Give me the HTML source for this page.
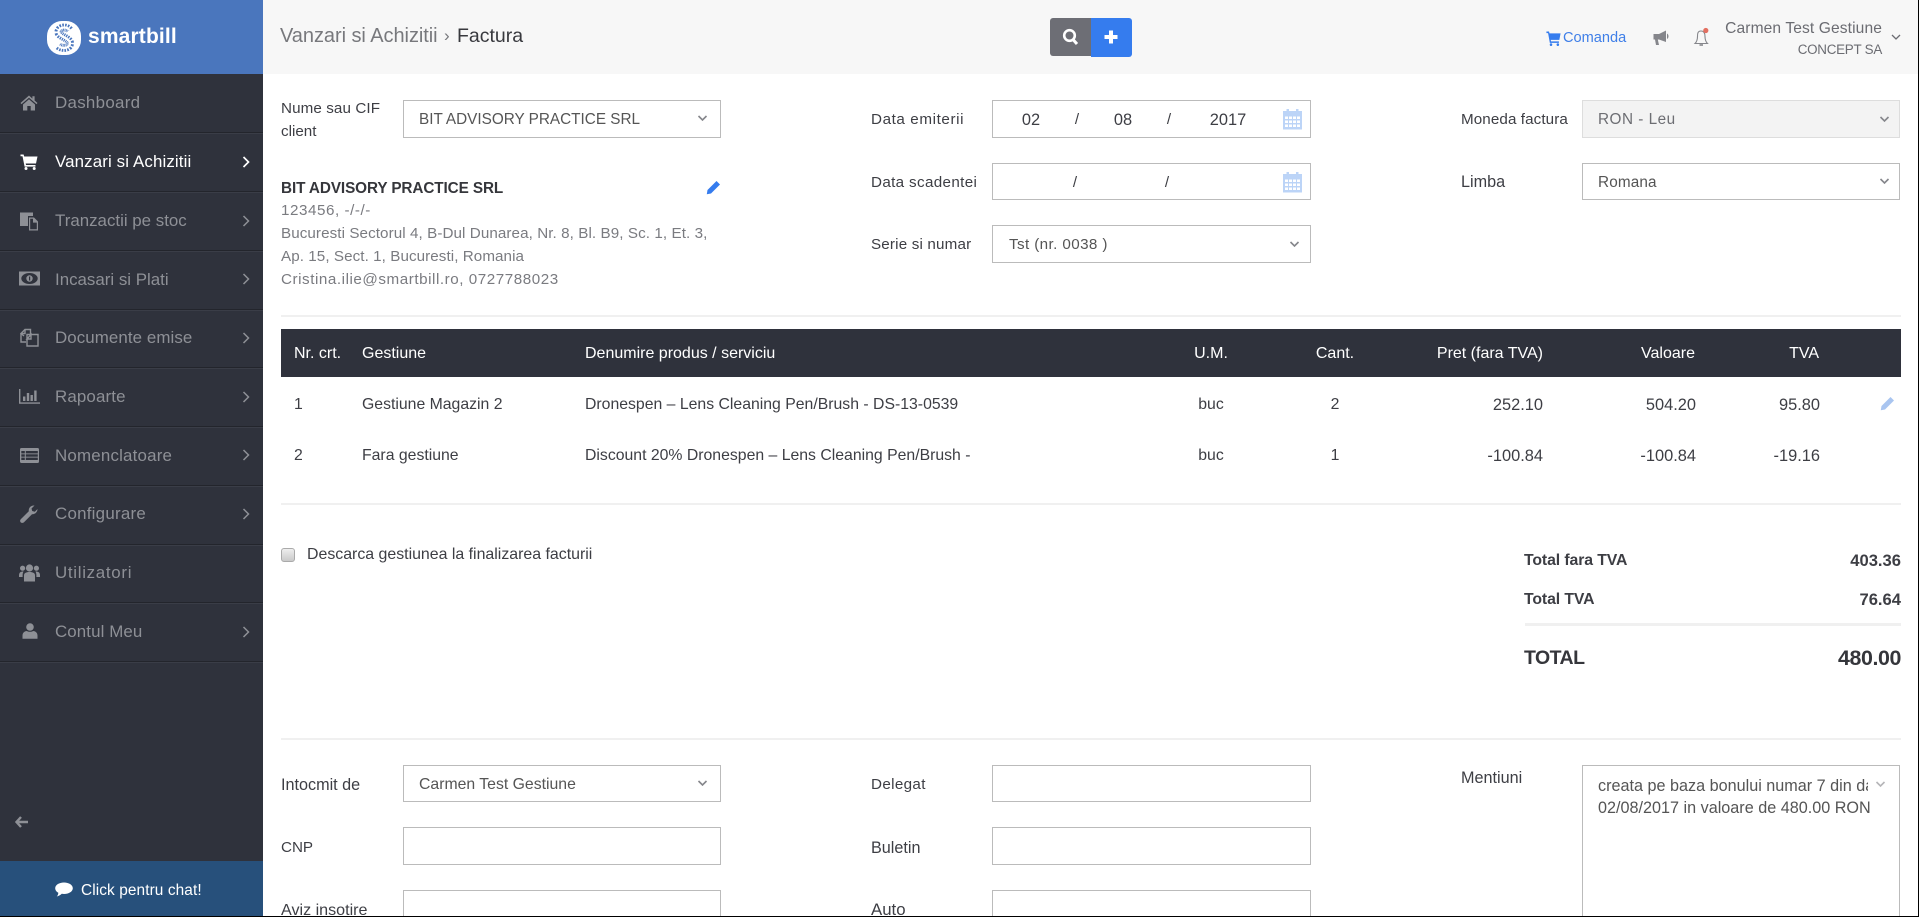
<!DOCTYPE html>
<html lang="ro">
<head>
<meta charset="utf-8">
<title>Factura</title>
<style>
html,body{margin:0;padding:0;width:1919px;height:917px;overflow:hidden;background:#fff}
body{font-family:"Liberation Sans",sans-serif;position:relative;color:#444}
#page{position:absolute;left:0;top:0;width:1918px;height:916px;overflow:hidden;background:#fff}
#edgeR{position:absolute;left:1918px;top:0;width:1px;height:917px;background:#000}
#edgeB{position:absolute;left:0;top:916px;width:1919px;height:1px;background:#000}
.t{position:absolute;white-space:nowrap;line-height:20px;height:20px;font-size:15.2px;color:#3d3e44}
.r{text-align:right}
.c{text-align:center}
.box{position:absolute;box-sizing:border-box;border:1px solid #bbb;background:#fff}
.hr{position:absolute;background:#f0f0f0;height:2px}
svg{position:absolute;display:block}
aside{position:absolute;left:0;top:0;width:263px;height:916px;background:#2f323c}
.logo{position:absolute;left:0;top:0;width:263px;height:74px;background:#4a76bd}
.sep{position:absolute;left:0;width:263px;height:2px;background:linear-gradient(#23252c 50%,#3a3d47 50%)}
.m{font-size:16.9px;color:#8e9096;left:55px;letter-spacing:0}
.chat{position:absolute;left:0;top:861px;width:263px;height:55px;background:#27507b}
header{position:absolute;left:263px;top:0;width:1655px;height:74px;background:#f7f7f7}
.v{color:#555;font-size:15.3px}
.a{color:#7a7b80}
.h{font-size:16px;color:#fff}
.d{font-size:15.8px}
.n{font-size:16.4px}
.wh{color:#fff}
</style>
</head>
<body>
<div id="page">

<aside>
  <div class="logo">
    <svg style="left:47px;top:21px" width="34" height="34" viewBox="0 0 34 34">
      <rect x="0" y="0" width="34" height="34" rx="15" fill="#fff"/>
      <path d="M22.5 9C20 5.5 12.5 5.5 11.5 10.5C10.5 15.5 23.5 17 23 22.5C22.5 28 14 28 11 24.5" fill="none" stroke="#4a76bd" stroke-width="8" stroke-dasharray="1.2 .9"/>
      <path d="M22.5 9C20 5.5 12.5 5.5 11.5 10.5C10.5 15.5 23.5 17 23 22.5C22.5 28 14 28 11 24.5" fill="none" stroke="#fff" stroke-width="2.2"/>
    </svg>
    <div class="t wh" style="left:88px;top:26px;font-size:21px;font-weight:bold;line-height:22px;height:22px;letter-spacing:.15px">smartbill</div>
  </div>

  <svg style="left:20px;top:95px" width="18" height="16" viewBox="0 0 18 16" fill="#8e9096"><path d="M9 0.5L0.5 8l1 1.1L9 2.7l7.5 6.4 1-1.1L14.6 5.5V1.2h-2.2v2.4zM3 9.5V15.5h4.3v-4.5h3.4v4.5H15V9.5L9 4.3z"/></svg>
  <div class="t m" style="top:93px;letter-spacing:.3px">Dashboard</div>
  <div class="sep" style="top:132px"></div>

  <svg style="left:20px;top:154px" width="18" height="16" viewBox="0 0 18 16" fill="#fff"><path d="M0.5 0.5H3.6L4.2 2.5H17.5L16 9.5H5.7L6 11H15.5V12.6H4.6L2.5 2.2H0.5z"/><circle cx="6" cy="14.5" r="1.5"/><circle cx="14.2" cy="14.5" r="1.5"/></svg>
  <div class="t m" style="top:152px;color:#fff;letter-spacing:.12px">Vanzari si Achizitii</div>
  <svg style="left:242px;top:156px" width="8" height="12" viewBox="0 0 8 12"><path d="M1.5 1L6.5 6L1.5 11" fill="none" stroke="#fff" stroke-width="1.7"/></svg>
  <div class="sep" style="top:191px"></div>

  <svg style="left:20px;top:211px" width="19" height="20" viewBox="0 0 19 20" fill="#8e9096"><path d="M0 1.5H13V5H8V15H0z"/><path d="M9 6.5H14L18 10.5V19.5H9zM10.2 7.7V18.3H16.8V11.6H13V7.7z"/></svg>
  <div class="t m" style="top:211px">Tranzactii pe stoc</div>
  <svg style="left:242px;top:215px" width="8" height="12" viewBox="0 0 8 12"><path d="M1.5 1L6.5 6L1.5 11" fill="none" stroke="#8e9096" stroke-width="1.5"/></svg>
  <div class="sep" style="top:250px"></div>

  <svg style="left:19px;top:271px" width="21" height="15" viewBox="0 0 21 15"><rect x="0" y="0.5" width="21" height="14" fill="#8e9096"/><ellipse cx="10.5" cy="7.5" rx="8.2" ry="5.5" fill="#2f323c"/><circle cx="10.5" cy="7.5" r="3.2" fill="#8e9096"/><rect x="10" y="5.5" width="1.2" height="4" fill="#2f323c"/></svg>
  <div class="t m" style="top:270px">Incasari si Plati</div>
  <svg style="left:242px;top:273px" width="8" height="12" viewBox="0 0 8 12"><path d="M1.5 1L6.5 6L1.5 11" fill="none" stroke="#8e9096" stroke-width="1.5"/></svg>
  <div class="sep" style="top:309px"></div>

  <svg style="left:20px;top:328px" width="19" height="20" viewBox="0 0 19 20" fill="none" stroke="#8e9096" stroke-width="1.4"><path d="M4 8L1 5.5L5 1.5H10.5V6.5"/><path d="M5 1.5V5.5H1M6 14H1V5.5"/><path d="M7 6.5H18V18H7zM7 11L11 6.5V11z"/></svg>
  <div class="t m" style="top:328px;letter-spacing:.08px">Documente emise</div>
  <svg style="left:242px;top:332px" width="8" height="12" viewBox="0 0 8 12"><path d="M1.5 1L6.5 6L1.5 11" fill="none" stroke="#8e9096" stroke-width="1.5"/></svg>
  <div class="sep" style="top:367px"></div>

  <svg style="left:19px;top:388px" width="21" height="16" viewBox="0 0 21 16" fill="#8e9096"><path d="M0 1H1.4V14.4H21V15.8H0z"/><rect x="4" y="8.5" width="2.4" height="4.5"/><rect x="7.8" y="5" width="2.4" height="8"/><rect x="11.5" y="7" width="2.4" height="6"/><rect x="15.2" y="2.5" width="2.4" height="10.5"/></svg>
  <div class="t m" style="top:387px;letter-spacing:.15px">Rapoarte</div>
  <svg style="left:242px;top:391px" width="8" height="12" viewBox="0 0 8 12"><path d="M1.5 1L6.5 6L1.5 11" fill="none" stroke="#8e9096" stroke-width="1.5"/></svg>
  <div class="sep" style="top:426px"></div>

  <svg style="left:20px;top:448px" width="19" height="15" viewBox="0 0 19 15"><rect width="19" height="15" rx="1.5" fill="#8e9096"/><g fill="#2f323c"><rect x="1.3" y="3" width="3.5" height="2.4"/><rect x="1.3" y="6.3" width="3.5" height="2.4"/><rect x="1.3" y="9.6" width="3.5" height="2.4"/><rect x="5.8" y="3" width="12" height="2.4"/><rect x="5.8" y="6.3" width="12" height="2.4"/><rect x="5.8" y="9.6" width="12" height="2.4"/></g></svg>
  <div class="t m" style="top:446px;letter-spacing:.2px">Nomenclatoare</div>
  <svg style="left:242px;top:449px" width="8" height="12" viewBox="0 0 8 12"><path d="M1.5 1L6.5 6L1.5 11" fill="none" stroke="#8e9096" stroke-width="1.5"/></svg>
  <div class="sep" style="top:485px"></div>

  <svg style="left:20px;top:505px" width="18" height="18" viewBox="0 0 18 18" fill="#8e9096"><path d="M17.5 4C17.5 7 15 9.5 12 9.2L4 17.2C3 18.2 1.4 18 .6 17.2C-.2 16.2 0 15 1 14L8.8 6.2C8.3 3 11 0 14.5 .5L11.5 3.5L12.2 6L14.8 6.7L17.5 4z"/></svg>
  <div class="t m" style="top:504px;letter-spacing:.25px">Configurare</div>
  <svg style="left:242px;top:508px" width="8" height="12" viewBox="0 0 8 12"><path d="M1.5 1L6.5 6L1.5 11" fill="none" stroke="#8e9096" stroke-width="1.5"/></svg>
  <div class="sep" style="top:544px"></div>

  <svg style="left:19px;top:564px" width="21" height="18" viewBox="0 0 21 18" fill="#8e9096"><circle cx="10.5" cy="4" r="3.6"/><circle cx="3.6" cy="4.2" r="2.6"/><circle cx="17.4" cy="4.2" r="2.6"/><path d="M5 17.5V11.5C5 9 7 8 10.5 8C14 8 16 9 16 11.5V17.5z"/><path d="M0 11.5C0 8.5 1.5 7.5 4.5 7.5C4 8.5 3.6 9.5 3.6 11.5V13H0zM21 11.5C21 8.5 19.5 7.5 16.5 7.5C17 8.5 17.4 9.5 17.4 11.5V13H21z"/></svg>
  <div class="t m" style="top:563px;letter-spacing:.7px">Utilizatori</div>
  <div class="sep" style="top:602px"></div>

  <svg style="left:22px;top:623px" width="16" height="16" viewBox="0 0 16 16" fill="#8e9096"><circle cx="8" cy="4" r="3.8"/><path d="M0.5 15.8V12.5C0.5 9.5 3 8 5 8C6 9 10 9 11 8C13 8 15.5 9.5 15.5 12.5V15.8z"/></svg>
  <div class="t m" style="top:622px;letter-spacing:.1px">Contul Meu</div>
  <svg style="left:242px;top:626px" width="8" height="12" viewBox="0 0 8 12"><path d="M1.5 1L6.5 6L1.5 11" fill="none" stroke="#8e9096" stroke-width="1.5"/></svg>
  <div class="sep" style="top:661px"></div>

  <svg style="left:15px;top:816px" width="13" height="12" viewBox="0 0 13 12"><path d="M6 1L1.5 6L6 11M2 6H13" fill="none" stroke="#8e9096" stroke-width="2.4"/></svg>

  <div class="chat">
    <svg style="left:55px;top:21px" width="18" height="16" viewBox="0 0 18 16"><path d="M9 0.5C14 0.5 17.8 3 17.8 6.2C17.8 9.4 14 12 9 12C8.2 12 7.5 12 6.8 11.8C5.5 13 3.8 14 1.8 14.5C2.8 13.3 3.3 12 3.3 10.7C1.3 9.7 .2 8 .2 6.2C.2 3 4 .5 9 .5z" fill="#fff"/></svg>
    <div class="t wh" style="left:81px;top:20px;font-size:15.4px;letter-spacing:.1px">Click pentru chat!</div>
  </div>
</aside>

<header>
  <div class="t" style="left:17px;top:26px;font-size:20px;color:#77787c;letter-spacing:-.05px">Vanzari si Achizitii</div>
  <div class="t" style="left:181px;top:26px;font-size:17px;color:#77787c">&rsaquo;</div>
  <div class="t" style="left:194px;top:26px;font-size:19.5px;color:#38393e">Factura</div>

  <div style="position:absolute;left:787px;top:18px;width:42px;height:38px;background:#6d6e75;border-radius:3px 0 0 3px"></div>
  <svg style="left:799px;top:28px" width="17" height="18" viewBox="0 0 17 18"><circle cx="7.5" cy="7.5" r="5.3" fill="none" stroke="#fff" stroke-width="2.6"/><path d="M11 11.5L15 16" stroke="#fff" stroke-width="3"/></svg>
  <div style="position:absolute;left:828px;top:18px;width:41px;height:39px;background:#357cee;border-radius:0 3px 3px 0"></div>
  <svg style="left:841px;top:30px" width="14" height="14" viewBox="0 0 14 14"><path d="M5 .5H9V5H13.5V9H9V13.5H5V9H.5V5H5z" fill="#fff"/></svg>

  <svg style="left:1283px;top:31px" width="15" height="15" viewBox="0 0 18 16" preserveAspectRatio="none" fill="#357cee"><path d="M0.5 0.5H3.6L4.2 2.5H17.5L16 9.5H5.7L6 11H15.5V12.6H4.6L2.5 2.2H0.5z"/><circle cx="6" cy="14.5" r="1.5"/><circle cx="14.2" cy="14.5" r="1.5"/></svg>
  <div class="t" style="left:1300px;top:28px;font-size:14.6px;color:#3f7fe8">Comanda</div>

  <svg style="left:1390px;top:30px" width="17" height="16" viewBox="0 0 17 16" fill="#85868b"><path d="M0.5 4H6L13 .5V12L6 9.5H4.8L6 15H3L2 9.5H.5z"/><path d="M14 3.5C16 4.5 16 8 14 9z"/></svg>
  <svg style="left:1430px;top:27px" width="18" height="21" viewBox="0 0 18 21" fill="none" stroke="#85868b" stroke-width="1.1"><path d="M8 4C4.5 4 4.5 7 4.5 9.5C4.5 13 3.5 15 2 16.5H14.5C13 15 12 13 12 9.5C12 7 11.5 4 8 4z"/><path d="M6.5 18H10" stroke-width="1.6"/><circle cx="12.8" cy="3.5" r="2.6" fill="#e36f60" stroke="none"/></svg>

  <div class="t r" style="right:36px;top:19px;font-size:15.6px;color:#6b6c72;letter-spacing:.1px">Carmen Test Gestiune</div>
  <div class="t r" style="right:36px;top:40px;font-size:13.4px;color:#6b6c72;letter-spacing:-.25px">CONCEPT SA</div>
  <svg style="left:1628px;top:34px" width="10" height="7" viewBox="0 0 10 7"><path d="M1 1L5 5L9 1" fill="none" stroke="#6b6c72" stroke-width="1.3"/></svg>
</header>

<main>
  <div class="t" style="left:281px;top:99px;letter-spacing:.1px">Nume sau CIF</div>
  <div class="t" style="left:281px;top:122px">client</div>
  <div class="box" style="left:403px;top:100px;width:318px;height:38px"></div>
  <div class="t v" style="left:419px;top:110px">BIT ADVISORY PRACTICE SRL</div>
  <svg style="left:697px;top:115px" width="11" height="7" viewBox="0 0 10 7"><path d="M1 1L5 5L9 1" fill="none" stroke="#85868b" stroke-width="1.6"/></svg>

  <div class="t" style="left:281px;top:179px;font-weight:bold;font-size:15.3px;letter-spacing:-.1px;color:#35363b">BIT ADVISORY PRACTICE SRL</div>
  <svg style="left:706px;top:180px" width="15" height="15" viewBox="0 0 15 15" fill="#357cee"><path d="M10.5 1L14 4.5L5 13.5L.8 14.2L1.5 10z"/></svg>
  <div class="t a" style="left:281px;top:201px;letter-spacing:.55px">123456, -/-/-</div>
  <div class="t a" style="left:281px;top:224px;letter-spacing:.08px">Bucuresti Sectorul 4, B-Dul Dunarea, Nr. 8, Bl. B9, Sc. 1, Et. 3,</div>
  <div class="t a" style="left:281px;top:247px;letter-spacing:.07px">Ap. 15, Sect. 1, Bucuresti, Romania</div>
  <div class="t a" style="left:281px;top:270px;letter-spacing:.55px">Cristina.ilie@smartbill.ro, 0727788023</div>

  <div class="t" style="left:871px;top:110px;letter-spacing:.6px">Data emiterii</div>
  <div class="box" style="left:992px;top:100px;width:319px;height:38px"></div>
  <div class="t c" style="left:1011px;top:110px;width:40px;font-size:16.4px">02</div>
  <div class="t c" style="left:1067px;top:110px;width:20px">/</div>
  <div class="t c" style="left:1103px;top:110px;width:40px;font-size:16.4px">08</div>
  <div class="t c" style="left:1159px;top:110px;width:20px">/</div>
  <div class="t c" style="left:1208px;top:110px;width:40px;font-size:16.4px">2017</div>
  <svg style="left:1283px;top:108px" width="19" height="22" viewBox="0 0 19 22" fill="#bcd4f7"><path d="M0 3H3.5V1H6V3H13V1H15.5V3H19V21.5H0z"/><g fill="#fff"><rect x="2" y="8.5" width="3" height="2.5"/><rect x="6" y="8.5" width="3" height="2.5"/><rect x="10" y="8.5" width="3" height="2.5"/><rect x="14" y="8.5" width="3" height="2.5"/><rect x="2" y="12.5" width="3" height="2.5"/><rect x="6" y="12.5" width="3" height="2.5"/><rect x="10" y="12.5" width="3" height="2.5"/><rect x="14" y="12.5" width="3" height="2.5"/><rect x="2" y="16.5" width="3" height="2.5"/><rect x="6" y="16.5" width="3" height="2.5"/><rect x="10" y="16.5" width="3" height="2.5"/><rect x="14" y="16.5" width="3" height="2.5"/></g></svg>

  <div class="t" style="left:871px;top:173px;letter-spacing:.35px">Data scadentei</div>
  <div class="box" style="left:992px;top:163px;width:319px;height:37px"></div>
  <div class="t c" style="left:1065px;top:173px;width:20px">/</div>
  <div class="t c" style="left:1157px;top:173px;width:20px">/</div>
  <svg style="left:1283px;top:171px" width="19" height="22" viewBox="0 0 19 22" fill="#bcd4f7"><path d="M0 3H3.5V1H6V3H13V1H15.5V3H19V21.5H0z"/><g fill="#fff"><rect x="2" y="8.5" width="3" height="2.5"/><rect x="6" y="8.5" width="3" height="2.5"/><rect x="10" y="8.5" width="3" height="2.5"/><rect x="14" y="8.5" width="3" height="2.5"/><rect x="2" y="12.5" width="3" height="2.5"/><rect x="6" y="12.5" width="3" height="2.5"/><rect x="10" y="12.5" width="3" height="2.5"/><rect x="14" y="12.5" width="3" height="2.5"/><rect x="2" y="16.5" width="3" height="2.5"/><rect x="6" y="16.5" width="3" height="2.5"/><rect x="10" y="16.5" width="3" height="2.5"/><rect x="14" y="16.5" width="3" height="2.5"/></g></svg>

  <div class="t" style="left:871px;top:235px;letter-spacing:.17px">Serie si numar</div>
  <div class="box" style="left:992px;top:225px;width:319px;height:38px"></div>
  <div class="t v" style="left:1009px;top:235px;font-size:15.2px;letter-spacing:.4px">Tst (nr. 0038 )</div>
  <svg style="left:1289px;top:241px" width="11" height="7" viewBox="0 0 10 7"><path d="M1 1L5 5L9 1" fill="none" stroke="#85868b" stroke-width="1.6"/></svg>

  <div class="t" style="left:1461px;top:110px;letter-spacing:.1px">Moneda factura</div>
  <div class="box" style="left:1582px;top:100px;width:318px;height:38px;background:#f3f3f3;border-color:#ddd"></div>
  <div class="t" style="left:1598px;top:110px;color:#6d6e73;font-size:15.3px;letter-spacing:.5px">RON - Leu</div>
  <svg style="left:1879px;top:116px" width="11" height="7" viewBox="0 0 10 7"><path d="M1 1L5 5L9 1" fill="none" stroke="#85868b" stroke-width="1.6"/></svg>

  <div class="t" style="left:1461px;top:172px;font-size:16.2px">Limba</div>
  <div class="box" style="left:1582px;top:163px;width:318px;height:37px"></div>
  <div class="t v" style="left:1598px;top:173px;letter-spacing:.15px">Romana</div>
  <svg style="left:1879px;top:178px" width="11" height="7" viewBox="0 0 10 7"><path d="M1 1L5 5L9 1" fill="none" stroke="#85868b" stroke-width="1.6"/></svg>

  <div class="hr" style="left:281px;top:315px;width:1620px"></div>

  <div style="position:absolute;left:281px;top:329px;width:1620px;height:48px;background:#2f323c"></div>
  <div class="t h" style="left:294px;top:344px">Nr. crt.</div>
  <div class="t h" style="left:362px;top:344px">Gestiune</div>
  <div class="t h" style="left:585px;top:344px">Denumire produs / serviciu</div>
  <div class="t h c" style="left:1171px;top:344px;width:80px">U.M.</div>
  <div class="t h c" style="left:1295px;top:344px;width:80px">Cant.</div>
  <div class="t h r" style="left:1343px;top:344px;width:200px">Pret (fara TVA)</div>
  <div class="t h r" style="left:1495px;top:344px;width:200px">Valoare</div>
  <div class="t h r" style="left:1619px;top:344px;width:200px">TVA</div>

  <div class="t d" style="left:294px;top:395px">1</div>
  <div class="t d" style="left:362px;top:395px">Gestiune Magazin 2</div>
  <div class="t d" style="left:585px;top:395px">Dronespen – Lens Cleaning Pen/Brush - DS-13-0539</div>
  <div class="t d c" style="left:1171px;top:395px;width:80px">buc</div>
  <div class="t d c" style="left:1295px;top:395px;width:80px">2</div>
  <div class="t n r" style="left:1343px;top:395px;width:200px">252.10</div>
  <div class="t n r" style="left:1496px;top:395px;width:200px">504.20</div>
  <div class="t n r" style="left:1620px;top:395px;width:200px">95.80</div>
  <svg style="left:1880px;top:396px" width="15" height="15" viewBox="0 0 15 15" fill="#a9c5f0"><path d="M10.5 1L14 4.5L5 13.5L.8 14.2L1.5 10z"/></svg>

  <div class="t d" style="left:294px;top:446px">2</div>
  <div class="t d" style="left:362px;top:446px">Fara gestiune</div>
  <div class="t d" style="left:585px;top:446px">Discount 20% Dronespen – Lens Cleaning Pen/Brush -</div>
  <div class="t d c" style="left:1171px;top:446px;width:80px">buc</div>
  <div class="t d c" style="left:1295px;top:446px;width:80px">1</div>
  <div class="t n r" style="left:1343px;top:446px;width:200px">-100.84</div>
  <div class="t n r" style="left:1496px;top:446px;width:200px">-100.84</div>
  <div class="t n r" style="left:1620px;top:446px;width:200px">-19.16</div>

  <div class="hr" style="left:281px;top:503px;width:1620px"></div>

  <div style="position:absolute;left:281px;top:548px;width:14px;height:14px;box-sizing:border-box;border:1px solid #aaa;border-radius:3px;background:linear-gradient(#eee,#c9c9c9)"></div>
  <div class="t" style="left:307px;top:545px;font-size:15.9px">Descarca gestiunea la finalizarea facturii</div>

  <div class="t" style="left:1524px;top:551px;font-weight:bold;font-size:15.8px;letter-spacing:-.1px">Total fara TVA</div>
  <div class="t r" style="left:1701px;top:551px;width:200px;font-weight:bold;font-size:16.6px">403.36</div>
  <div class="t" style="left:1524px;top:590px;font-weight:bold;font-size:15.8px;letter-spacing:-.1px">Total TVA</div>
  <div class="t r" style="left:1701px;top:590px;width:200px;font-weight:bold;font-size:16.6px">76.64</div>
  <div class="hr" style="left:1525px;top:623px;width:376px;height:3px"></div>
  <div class="t" style="left:1524px;top:648px;font-weight:bold;font-size:19.5px;letter-spacing:-.55px;color:#35363b">TOTAL</div>
  <div class="t r" style="left:1701px;top:648px;width:200px;font-weight:bold;font-size:21.4px;letter-spacing:-.4px;color:#35363b">480.00</div>

  <div class="hr" style="left:281px;top:738px;width:1620px"></div>

  <div class="t" style="left:281px;top:775px;font-size:16.2px">Intocmit de</div>
  <div class="box" style="left:403px;top:765px;width:318px;height:37px"></div>
  <div class="t v" style="left:419px;top:775px;font-size:15.8px">Carmen Test Gestiune</div>
  <svg style="left:697px;top:780px" width="11" height="7" viewBox="0 0 10 7"><path d="M1 1L5 5L9 1" fill="none" stroke="#85868b" stroke-width="1.6"/></svg>

  <div class="t" style="left:281px;top:838px">CNP</div>
  <div class="box" style="left:403px;top:827px;width:318px;height:38px"></div>
  <div class="t" style="left:281px;top:900px;font-size:16.1px">Aviz insotire</div>
  <div class="box" style="left:403px;top:890px;width:318px;height:38px"></div>

  <div class="t" style="left:871px;top:775px;letter-spacing:.35px">Delegat</div>
  <div class="box" style="left:992px;top:765px;width:319px;height:37px"></div>
  <div class="t" style="left:871px;top:838px;font-size:16.2px">Buletin</div>
  <div class="box" style="left:992px;top:827px;width:319px;height:38px"></div>
  <div class="t" style="left:871px;top:900px;font-size:16.8px">Auto</div>
  <div class="box" style="left:992px;top:890px;width:319px;height:38px"></div>

  <div class="t" style="left:1461px;top:768px;font-size:16.2px">Mentiuni</div>
  <div class="box" style="left:1582px;top:765px;width:318px;height:170px"></div>
  <div style="position:absolute;left:1598px;top:776px;width:270px;height:22px;overflow:hidden"><div class="t v" style="left:0;top:0;font-size:16.2px">creata pe baza bonului numar 7 din data</div></div>
  <div class="t v" style="left:1598px;top:798px;font-size:16.2px">02/08/2017 in valoare de 480.00 RON</div>
  <svg style="left:1875px;top:781px" width="11" height="7" viewBox="0 0 10 7"><path d="M1 1L5 5L9 1" fill="none" stroke="#b5b5b8" stroke-width="1.6"/></svg>
</main>
</div>
<div id="edgeR"></div>
<div id="edgeB"></div>
</body>
</html>
